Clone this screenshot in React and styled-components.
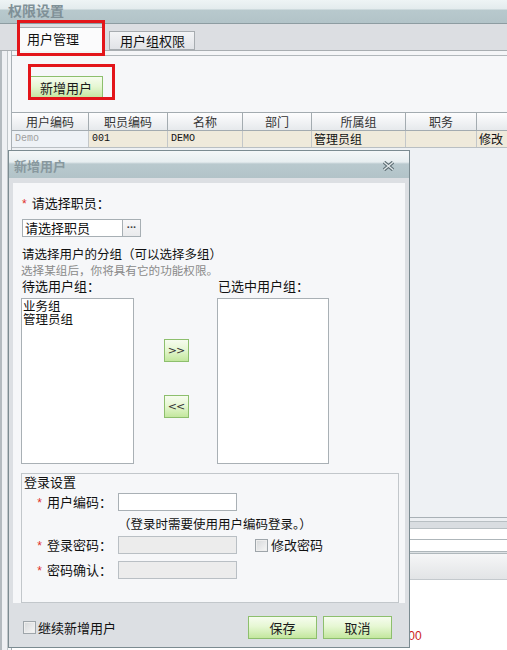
import styled, { createGlobalStyle, css } from "styled-components";

const GlobalStyle = createGlobalStyle`
  html, body { margin: 0; padding: 0; background: #eef1f4; }
  body {
    font-family: "Noto Sans CJK SC", "Liberation Sans", sans-serif;
    font-size: 13px;
    color: #111;
  }
  * { box-sizing: border-box; }
`;

const COLUMNS = [
  { title: "用户编码", width: 77 },
  { title: "职员编码", width: 79 },
  { title: "名称", width: 75 },
  { title: "部门", width: 69 },
  { title: "所属组", width: 94 },
  { title: "职务", width: 71 },
  { title: "", width: 60 },
];

const ROW = [
  { text: "Demo", muted: true, mono: true },
  { text: "001", mono: true },
  { text: "DEMO", mono: true },
  { text: "" },
  { text: "管理员组" },
  { text: "" },
  { text: "修改" },
];

// red annotation frame drawn over a part, offsets are [top, right, bottom, left]
const markCss = css`
  position: relative;
  &::after {
    content: "";
    position: absolute;
    top: ${p => p.$mark[0]}px;
    right: ${p => p.$mark[1]}px;
    bottom: ${p => p.$mark[2]}px;
    left: ${p => p.$mark[3]}px;
    border: 3px solid #e3151a;
    pointer-events: none;
  }
`;

const Page = styled.div`
  position: relative;
  width: 507px;
  height: 650px;
  overflow: hidden;
  display: flex;
  flex-direction: column;
  background: #eef1f4;
`;

const TitleBar = styled.div`
  flex: none;
  height: 24px;
  padding-left: 8px;
  background: linear-gradient(#eef4f5 0, #e3ebed 9px, #b8c9cd 10px, #b2c3c8 23px, #8d9ca1 23px);
  font-size: 14px;
  font-weight: bold;
  line-height: 20px;
  color: #7f9097;
`;

const TabStrip = styled.div`
  flex: none;
  height: 27px;
  display: flex;
  align-items: flex-end;
  gap: 6px;
  padding-left: 19px;
  background: #dcdee2;
  border-bottom: 1px solid #a8adb1;
`;

const Tab = styled.div`
  height: ${p => (p.$active ? 24 : 19)}px;
  width: ${p => (p.$active ? 84 : 86)}px;
  margin-bottom: ${p => (p.$active ? -1 : 0)}px;
  padding-left: ${p => (p.$active ? 7 : 10)}px;
  border: 1px solid #a7acb0;
  border-bottom: ${p => (p.$active ? "none" : "1px solid #a7acb0")};
  background: ${p => (p.$active ? "#fbfbfc" : "linear-gradient(#f3f4f6, #e1e3e7)")};
  font-size: 13px;
  line-height: ${p => (p.$active ? 22 : 17)}px;
  color: #111;
  ${p => p.$mark && markCss}
`;

const Main = styled.div`
  flex: 1;
  min-height: 0;
  display: flex;
`;

const Rail = styled.div`
  flex: none;
  width: 11px;
  border-left: 2px solid #b3babf;
  background: #eef0f3;
  box-shadow: inset -3px 0 0 #f3f5f7, inset -4px 0 0 #bfc5c9;
`;

const PanelWrap = styled.div`
  flex: 1;
  min-width: 0;
  display: flex;
  flex-direction: column;
  padding-top: 4px;
  border-left: 1px solid #a9b0b5;
  background: #f4f5f7;
`;

const Panel = styled.div`
  flex: 1;
  display: flex;
  flex-direction: column;
  border-top: 1px solid #b1b7bb;
  background: #f6f7f9;
`;

const Toolbar = styled.div`
  flex: none;
  height: 56px;
  padding: 20px 0 0 17px;
`;

const GreenButton = styled.button`
  width: ${p => p.$w}px;
  height: 23px;
  padding: 0;
  border: 1px solid #8dbf6d;
  border-radius: 0;
  background: linear-gradient(#f6fcef 0%, #e6f7d3 45%, #c3e79e 100%);
  font-family: "Noto Sans CJK SC", sans-serif;
  font-size: 13px;
  line-height: 1;
  color: #1a1a1a;
  ${p => p.$mark && markCss}
`;

const ArrowButton = styled(GreenButton)`
  font-family: "DejaVu Sans", sans-serif;
  font-size: 11px;
  letter-spacing: -1px;
  color: #333;
`;

const HeadRow = styled.div`
  flex: none;
  display: flex;
  height: 19px;
  border-top: 1px solid #a3abb0;
  border-bottom: 1px solid #a3abb0;
  background: linear-gradient(#fdfdfe, #e6e9ec);
`;

const HeadCell = styled.div`
  flex: none;
  width: ${p => p.$w}px;
  border-right: 1px solid #a3abb0;
  text-align: center;
  font-size: 12px;
  line-height: 17px;
  color: #333;
`;

const DataRow = styled.div`
  flex: none;
  display: flex;
  height: 17px;
  border-bottom: 1px solid #b9bfc3;
  background: #efeadb;
`;

const DataCell = styled.div`
  flex: none;
  width: ${p => p.$w}px;
  padding-left: ${p => (p.$mono ? 3 : 2)}px;
  border-right: 1px solid #c3c7c9;
  background: ${p => (p.$muted ? "#eef2f6" : "transparent")};
  color: ${p => (p.$muted ? "#a0a0a0" : "#111")};
  font-family: ${p => (p.$mono ? '"Liberation Mono", monospace' : "inherit")};
  font-size: ${p => (p.$mono ? 10 : 12)}px;
  line-height: 16px;
  white-space: nowrap;
  overflow: hidden;
`;

const Filler = styled.div`
  flex: 1;
  background: #eef1f4;
`;

const Strip = styled.div`
  flex: none;
  height: ${p => p.$h}px;
  background: ${p => p.$bg};
  border-bottom: ${p => (p.$line ? `1px solid ${p.$line}` : "none")};
`;

const Sheet = styled.div`
  flex: none;
  height: 70px;
  padding: 45px 0 0 383px;
  background: #fff;
  box-shadow: inset 402px -2px 0 #fff, inset 0 -2px 0 #2f7fc0;
`;

const Amount = styled.span`
  font-family: "Liberation Sans", sans-serif;
  font-size: 12px;
  line-height: 14px;
  color: #cc1a1a;
`;

/* dialog */

const Dialog = styled.div`
  position: absolute;
  left: 8px;
  top: 150px;
  z-index: 5;
  width: 402px;
  height: 498px;
  display: flex;
  flex-direction: column;
  background: #dcdfe3;
  border: 1px solid #7b8b91;
`;

const DialogHead = styled.div`
  flex: none;
  height: 27px;
  display: flex;
  align-items: center;
  justify-content: space-between;
  padding: 3px 14px 0 5px;
  background: linear-gradient(#f4f7f8 0, #e7eef0 11px, #b9c9ce 13px, #b2c3c8 100%);
  font-size: 13px;
  font-weight: bold;
  line-height: 16px;
  color: #88989e;
`;

const DialogBody = styled.div`
  flex: none;
  height: 420px;
  margin: 5px 4px 0;
  padding: 12px 0 0 8px;
  background: #f6f7f9;
`;

const Star = styled.span`
  font-family: "Liberation Sans", sans-serif;
  font-size: 12px;
  color: #e0302a;
  margin-right: 5px;
`;

const FieldLabel = styled.div`
  padding-left: 1px;
  line-height: 16px;
`;

const PickerRow = styled.div`
  display: flex;
  margin: 7px 0 0 1px;
`;

const PickerInput = styled.div`
  width: 101px;
  height: 18px;
  padding-left: 2px;
  border: 1px solid #a7afb4;
  background: #fff;
  line-height: 16px;
`;

const PickerButton = styled.div`
  width: 18px;
  height: 18px;
  border: 1px solid #a7afb4;
  border-left: none;
  background: linear-gradient(#f8f8f9, #e9eaec);
  font-family: "Liberation Sans", sans-serif;
  font-size: 11px;
  font-weight: bold;
  line-height: 14px;
  letter-spacing: -0.5px;
  text-align: center;
  color: #444;
`;

const GroupTitle = styled.div`
  margin-top: 9px;
  padding-left: 1px;
  font-size: 12.5px;
  line-height: 16px;
`;

const Hint = styled.div`
  font-size: 11.6px;
  line-height: 16px;
  color: #8a8a8a;
`;

const Groups = styled.div`
  display: grid;
  grid-template-columns: 113px 83px 112px;
  grid-template-rows: 16px 166px;
  row-gap: 4px;
`;

const ListLabel = styled.div`
  grid-column: ${p => p.$col};
  padding-left: 1px;
  line-height: 16px;
  white-space: nowrap;
`;

const ListBox = styled.div`
  grid-column: ${p => p.$col};
  grid-row: 2;
  padding: 0 1px;
  border: 1px solid #a9b0b5;
  background: #fff;
  font-size: 12.5px;
  line-height: 13px;
`;

const Movers = styled.div`
  grid-column: 2;
  grid-row: 2;
  display: flex;
  flex-direction: column;
  align-items: center;
  gap: 33px;
  padding: 41px 0 0 1px;
`;

const LoginBox = styled.div`
  width: 378px;
  height: 130px;
  margin-top: 9px;
  border: 1px solid #c2c7cb;
`;

const Legend = styled.div`
  padding-left: 2px;
  line-height: 16px;
`;

const LoginRow = styled.div`
  display: flex;
  align-items: center;
  margin-top: ${p => p.$gap}px;
`;

const LoginLabel = styled.div`
  width: 96px;
  padding-right: 6px;
  text-align: right;
  line-height: 16px;
`;

const TextInput = styled.div`
  width: 119px;
  height: 18px;
  border: 1px solid ${p => (p.$disabled ? "#b9bfc4" : "#a9b0b5")};
  background: ${p => (p.$disabled ? "#ececec" : "#fff")};
`;

const Note = styled.div`
  margin-top: 5px;
  padding-left: 96px;
  font-size: 12.5px;
  line-height: 16px;
`;

const CheckOption = styled.label`
  display: flex;
  align-items: center;
  gap: ${p => p.$gap}px;
  margin-left: ${p => p.$offset || 0}px;
  line-height: 16px;
`;

const Box = styled.span`
  flex: none;
  width: 13px;
  height: 13px;
  border: 1px solid #9ea5aa;
  background: linear-gradient(135deg, #d6d8da, #f7f7f7);
  box-shadow: inset 0 0 0 1px #eeeeee;
`;

const DialogFoot = styled.div`
  flex: 1;
  display: flex;
  align-items: center;
  justify-content: space-between;
  padding: 13px 17px 8px 14px;
`;

const FootButtons = styled.div`
  display: flex;
  gap: 6px;
`;

function CloseIcon() {
  return (
    <svg width="13" height="10" viewBox="0 0 13 10">
      <path d="M2 1.2 L11 8.8 M11 1.2 L2 8.8" stroke="#5f6f75" strokeWidth="3.6" />
      <path d="M2 1.2 L11 8.8 M11 1.2 L2 8.8" stroke="#e4eaec" strokeWidth="1.3" />
    </svg>
  );
}

export default function App() {
  return (
    <>
      <GlobalStyle />
      <Page>
        <TitleBar>权限设置</TitleBar>
        <TabStrip>
          <Tab $active $mark={[-8, -3, -5, -3]}>用户管理</Tab>
          <Tab>用户组权限</Tab>
        </TabStrip>
        <Main>
          <Rail />
          <PanelWrap>
            <Panel>
              <Toolbar>
                <GreenButton $w={74} $mark={[-13, -13, -2, -2]}>新增用户</GreenButton>
              </Toolbar>
              <HeadRow>
                {COLUMNS.map((c, i) => (
                  <HeadCell key={i} $w={c.width}>{c.title}</HeadCell>
                ))}
              </HeadRow>
              <DataRow>
                {ROW.map((c, i) => (
                  <DataCell key={i} $w={COLUMNS[i].width} $muted={c.muted} $mono={c.mono}>
                    {c.text}
                  </DataCell>
                ))}
              </DataRow>
              <Filler />
              <Strip $h={1} $bg="#a9b1b6" />
              <Strip $h={3} $bg="#eceff2" />
              <Strip $h={1} $bg="#b8bfc3" />
              <Strip $h={7} $bg="#d9dde1" $line="#b8bfc3" />
              <Strip $h={11} $bg="#fff" $line="#aeb6ba" />
              <Strip $h={12} $bg="#fff" $line="#aeb6ba" />
              <Strip $h={2} $bg="#dde1e4" $line="#b0b8bc" />
              <Strip $h={26} $bg="linear-gradient(#f6f6f7, #e2e4e6)" $line="#c4c9cd" />
              <Sheet>
                <Amount>1000</Amount>
              </Sheet>
            </Panel>
          </PanelWrap>
        </Main>

        <Dialog>
          <DialogHead>
            <span>新增用户</span>
            <CloseIcon />
          </DialogHead>
          <DialogBody>
            <FieldLabel><Star>*</Star>请选择职员：</FieldLabel>
            <PickerRow>
              <PickerInput>请选择职员</PickerInput>
              <PickerButton>···</PickerButton>
            </PickerRow>
            <GroupTitle>请选择用户的分组（可以选择多组）</GroupTitle>
            <Hint>选择某组后，你将具有它的功能权限。</Hint>
            <Groups>
              <ListLabel $col={1}>待选用户组：</ListLabel>
              <ListLabel $col={3}>已选中用户组：</ListLabel>
              <ListBox $col={1}>
                <div>业务组</div>
                <div>管理员组</div>
              </ListBox>
              <Movers>
                <ArrowButton $w={25}>&gt;&gt;</ArrowButton>
                <ArrowButton $w={25}>&lt;&lt;</ArrowButton>
              </Movers>
              <ListBox $col={3} />
            </Groups>
            <LoginBox>
              <Legend>登录设置</Legend>
              <LoginRow $gap={3}>
                <LoginLabel><Star>*</Star>用户编码：</LoginLabel>
                <TextInput />
              </LoginRow>
              <Note>（登录时需要使用用户编码登录。）</Note>
              <LoginRow $gap={4}>
                <LoginLabel><Star>*</Star>登录密码：</LoginLabel>
                <TextInput $disabled />
                <CheckOption $gap={3} $offset={18}><Box />修改密码</CheckOption>
              </LoginRow>
              <LoginRow $gap={7}>
                <LoginLabel><Star>*</Star>密码确认：</LoginLabel>
                <TextInput $disabled />
              </LoginRow>
            </LoginBox>
          </DialogBody>
          <DialogFoot>
            <CheckOption $gap={2}><Box />继续新增用户</CheckOption>
            <FootButtons>
              <GreenButton $w={69}>保存</GreenButton>
              <GreenButton $w={69}>取消</GreenButton>
            </FootButtons>
          </DialogFoot>
        </Dialog>
      </Page>
    </>
  );
}
